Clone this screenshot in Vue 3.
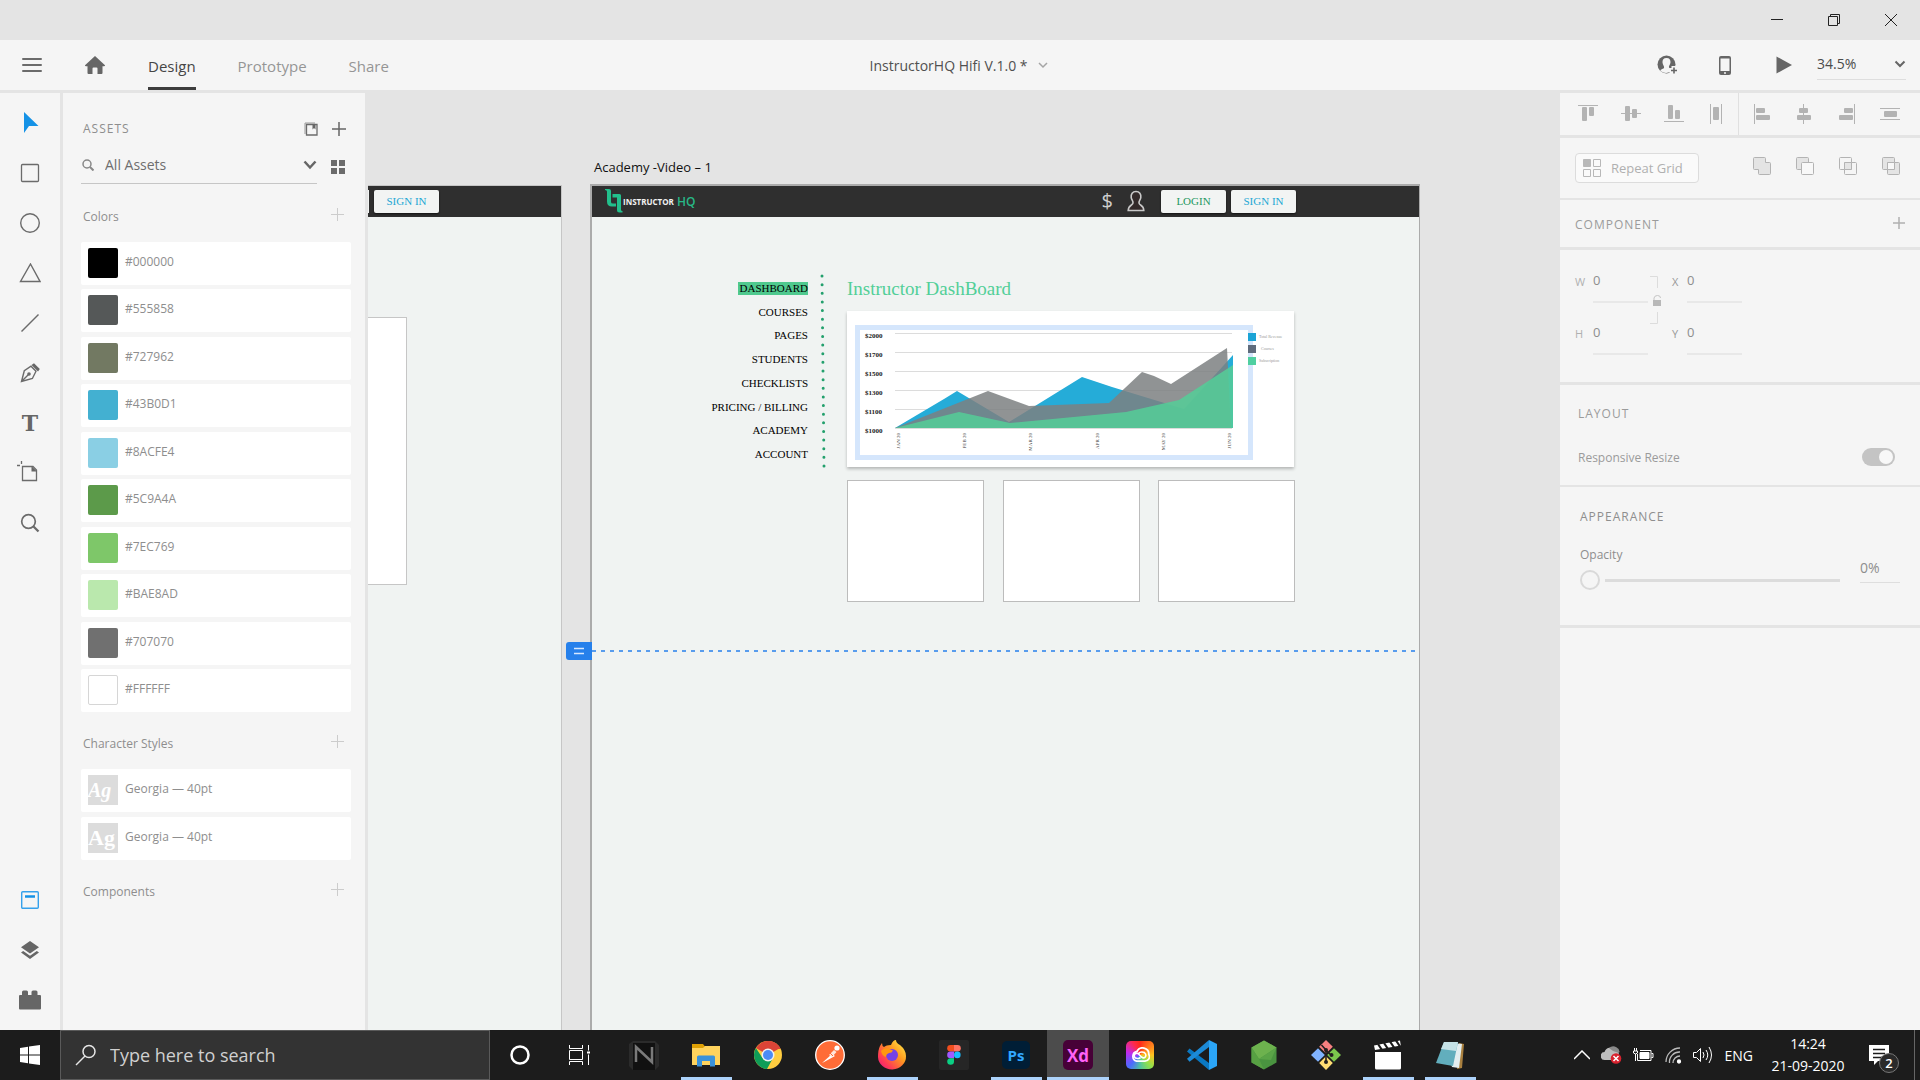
<script setup>
import { ref } from 'vue'

const tabs = ['Design', 'Prototype', 'Share']
const activeTab = ref('Design')
const search = ref('All Assets')
const zoom = ref('34.5%')
const responsive = ref(true)
const opacity = ref(0)

const colors = [
  '#000000', '#555858', '#727962', '#43B0D1', '#8ACFE4',
  '#5C9A4A', '#7EC769', '#BAE8AD', '#707070', '#FFFFFF',
]
const charStyles = [
  { id: 1, name: 'Georgia — 40pt', italic: true },
  { id: 2, name: 'Georgia — 40pt', italic: false },
]
const menu = ['DASHBOARD', 'COURSES', 'PAGES', 'STUDENTS', 'CHECKLISTS', 'PRICING / BILLING', 'ACADEMY', 'ACCOUNT']

const chart = {
  rows: [
    { label: '$2000', y: 22 }, { label: '$1700', y: 41 }, { label: '$1500', y: 60 },
    { label: '$1300', y: 79 }, { label: '$1100', y: 98 }, { label: '$1000', y: 117 },
  ],
  months: [
    { label: 'JAN 20', x: 53 }, { label: 'FEB 20', x: 119 }, { label: 'MAR 20', x: 185 },
    { label: 'APR 20', x: 252 }, { label: 'MAY 20', x: 318 }, { label: 'JUN 20', x: 384 },
  ],
  areas: [
    { color: '#25acd8', opacity: 1, points: '48,117 97,88 110,80 162,111 235,66 265,76 337,98 386,44 386,117' },
    { color: '#7c8081', opacity: 0.85, points: '48,117 141,80 182,95 262,92 295,61 307,65 324,73 380,37 384,117' },
    { color: '#55cc97', opacity: 0.88, points: '48,117 112,101 163,112 279,101 332,89 386,54 386,117' },
  ],
  legend: [
    { label: 'Total Revenue', color: '#1ba4d6', x: 412, y: 22 },
    { label: 'Courses', color: '#5f6b7c', x: 414, y: 34 },
    { label: 'Subscription', color: '#4fcfa0', x: 412, y: 46 },
  ],
}
const cards = [1, 2, 3]
</script>

<template>
  <div class="desktop">
    <header class="titlebar">
      <button class="win" aria-label="Minimize"><svg width="12" height="12"><path d="M0 5.500h12" stroke="#222" /></svg></button>
      <button class="win" aria-label="Restore"><svg width="12" height="12" fill="none" stroke="#222"><path d="M.5 2.500h9v9h-9zM2.500 2.500v-2h9v9h-2" /></svg></button>
      <button class="win" aria-label="Close"><svg width="12" height="12"><path d="M0 0l12 12M12 0L0 12" stroke="#222" /></svg></button>
    </header>

    <div class="appbar">
      <div class="appbar-left">
        <button class="plain" aria-label="Menu"><svg width="20" height="16"><path d="M1 2h18M1 8h18M1 14h18" stroke="#6b6b6b" stroke-width="2" stroke-linecap="round" /></svg></button>
        <button class="plain home" aria-label="Home"><svg width="20" height="18"><path d="M10 0l10 9.200q.3 1-1 1H17.500V17q0 1-1 1H12.500v-5.500q0-1-1-1h-3q-1 0-1 1V18H3.500q-1 0-1-1v-6.800H1q-1.300 0-1-1z" fill="#666" /></svg></button>
        <nav class="tabs">
          <button v-for="t in tabs" :key="t" class="tab" :class="{ active: t === activeTab }" @click="activeTab = t">{{ t }}</button>
        </nav>
      </div>
      <button class="doc">InstructorHQ Hifi V.1.0 *
        <svg width="12" height="8" fill="none"><path d="M2 2l4 4 4-4" stroke="#a5a5a5" stroke-width="1.500" /></svg>
      </button>
      <div class="appbar-right">
        <button class="plain" aria-label="Invite"><svg width="22" height="20"><circle cx="9.500" cy="9.500" r="9" fill="#666" /><path d="M9.500 3c3 0 4.200 2 4 4.500-.2 2-1.600 3-1.600 4.500s4 1.500 3.600 3.500Q9.500 20 3.500 16c-.4-2 3.600-2 3.600-3.500S5.700 9.500 5.500 7.500c-.2-2.500 1-4.500 4-4.500z" fill="#f5f5f5" /><path d="M17 11v9M12.500 15.500h9" stroke="#f5f5f5" stroke-width="5" /><path d="M17 12.500v6M14 15.500h6" stroke="#666" stroke-width="1.600" /></svg></button>
        <button class="plain" aria-label="Preview on device"><svg width="12" height="19"><rect width="12" height="19" rx="2" fill="#666" /><path d="M1.500 2.500h9V15h-9z" fill="#f5f5f5" /><circle cx="6" cy="17" r="1" fill="#f5f5f5" /></svg></button>
        <button class="plain" aria-label="Play"><svg width="16" height="18"><path d="M.5.500L16 9 .5 17.500z" fill="#666" /></svg></button>
        <label class="zoom">
          <select v-model="zoom" aria-label="Zoom level"><option>34.5%</option><option>100%</option></select>
          <svg width="12" height="8" fill="none"><path d="M1.500 1.500L6 6l4.500-4.500" stroke="#666" stroke-width="2" /></svg>
        </label>
      </div>
    </div>

    <main class="workspace">
      <aside class="tools">
        <div class="tool-group">
          <button class="tool" aria-label="Select"><svg width="20" height="22"><path d="M4 0v21l5-7h9.500z" fill="#1592e6" /></svg></button>
          <button class="tool" aria-label="Rectangle"><svg width="20" height="20"><rect x="1.500" y="1.500" width="17" height="17" rx="1" fill="none" stroke="#6b6b6b" stroke-width="1.300" /></svg></button>
          <button class="tool" aria-label="Ellipse"><svg width="22" height="22"><circle cx="11" cy="11" r="9.300" fill="none" stroke="#6b6b6b" stroke-width="1.400" /></svg></button>
          <button class="tool" aria-label="Polygon"><svg width="22" height="20"><path d="M11.500 1L21 18.500H1.500z" fill="none" stroke="#6b6b6b" stroke-width="1.400" /></svg></button>
          <button class="tool" aria-label="Line"><svg width="20" height="20"><path d="M1.500 18.500l17-17" stroke="#6b6b6b" stroke-width="1.400" /></svg></button>
          <button class="tool" aria-label="Pen"><svg width="20" height="20"><path d="M1.500 18.500l2.800-10.800L11 3.200l5 5-3.600 7.300zM1.500 18.500l7-7" fill="none" stroke="#6b6b6b" stroke-width="1.400" /><circle cx="9" cy="11" r="1.800" fill="#6b6b6b" /><path d="M11.500 2L14 .3 19.800 6 18 8.500z" fill="#666" /></svg></button>
          <button class="tool text-tool" aria-label="Text">T</button>
          <button class="tool artboard-tool" aria-label="Artboard"><svg width="24" height="22"><path d="M6.500 6.500h10.500l3.500 3.500v10.500h-14zM5.500 1v3M1 5.500h3" fill="none" stroke="#6b6b6b" stroke-width="1.300" /><path d="M15.500 6l5.500 5.500h-5.500z" fill="#666" /></svg></button>
          <button class="tool" aria-label="Zoom"><svg width="20" height="20" fill="none" stroke="#6b6b6b"><circle cx="8.500" cy="8.500" r="6.800" stroke-width="1.700" /><path d="M13 13l5.500 5.500" stroke-width="2.300" /></svg></button>
        </div>
        <div class="tool-group">
          <button class="tool" aria-label="Libraries"><svg width="18" height="18"><rect x=".7" y=".7" width="16.600" height="16.600" rx="1" fill="none" stroke="#35a1ec" stroke-width="1.400" /><path d="M4 5.500h10" stroke="#1592e6" stroke-width="2.500" /></svg></button>
          <button class="tool" aria-label="Layers"><svg width="20" height="19"><path d="M10 0l9 6.300-9 6.200-9-6.200zM1 11.500l2.200-1.500L10 14.700 16.800 10l2.200 1.500-9 6.500z" fill="#666" /></svg></button>
          <button class="tool" aria-label="Plugins"><svg width="22" height="20"><path d="M0 6q0-1 1-1h2V2q0-1.500 1.500-1.500h3Q9 .5 9 2v3h3.500V2q0-1.500 1.500-1.500h3q1.500 0 1.500 1.500v3h2.500q1 0 1 1v12.500q0 1-1 1H1q-1 0-1-1z" fill="#666" /></svg></button>
        </div>
      </aside>

      <aside class="assets">
        <div class="assets-head">
          <h2 class="caps">ASSETS</h2>
          <button class="plain" aria-label="Library manager"><svg width="14" height="14"><path d="M1 12V1h10" fill="none" stroke="#999" /><path d="M2.500 2.500h10.500v10.500H2.500z" fill="none" stroke="#6b6b6b" stroke-width="1.300" /><path d="M8.500 2.500h3v5l-1.500-1.500-1.500 1.500z" fill="#666" /></svg></button>
          <button class="plain" aria-label="Add asset"><svg width="14" height="14"><path d="M7 0v14M0 7h14" stroke="#666" stroke-width="1.500" /></svg></button>
        </div>
        <div class="assets-search">
          <div class="field">
            <svg width="12" height="12" fill="none" stroke="#888"><circle cx="5" cy="5" r="4" stroke-width="1.500" /><path d="M8 8l3.500 3.500" stroke-width="2" /></svg>
            <input v-model="search" type="text" aria-label="Search assets">
            <svg width="14" height="10" fill="none"><path d="M1.500 1.500L7 7.500l5.500-6" stroke="#666" stroke-width="2.500" /></svg>
          </div>
          <button class="plain" aria-label="Grid view"><svg width="14" height="14" fill="#6b6b6b"><path d="M0 0h6v6H0zM8 0h6v6H8zM0 8h6v6H0zM8 8h6v6H8z" /></svg></button>
        </div>

        <div class="group-head">
          <h3>Colors</h3>
          <button class="plain" aria-label="Add color"><svg width="14" height="14"><path d="M7.500 1v13M1 7.500h13" stroke="#ccc" stroke-width="1" /></svg></button>
        </div>
        <ul class="colors">
          <li v-for="c in colors" :key="c" class="item">
            <span class="swatch" :class="{ light: c === '#FFFFFF' }" :style="{ background: c }"></span>
            <span class="item-name">{{ c }}</span>
          </li>
        </ul>

        <div class="group-head">
          <h3>Character Styles</h3>
          <button class="plain" aria-label="Add character style"><svg width="14" height="14"><path d="M7.500 1v13M1 7.500h13" stroke="#ccc" stroke-width="1" /></svg></button>
        </div>
        <ul class="styles">
          <li v-for="s in charStyles" :key="s.id" class="item">
            <span class="sample" :class="{ italic: s.italic }">Ag</span>
            <span class="item-name">{{ s.name }}</span>
          </li>
        </ul>

        <div class="group-head">
          <h3>Components</h3>
          <button class="plain" aria-label="Add component"><svg width="14" height="14"><path d="M7.500 1v13M1 7.500h13" stroke="#ccc" stroke-width="1" /></svg></button>
        </div>
      </aside>

      <section class="canvas">
        <article class="board board-a">
          <div class="site-head">
            <span class="sliver"></span>
            <button class="site-btn blue">SIGN IN</button>
          </div>
          <div class="panel"></div>
        </article>

        <p class="board-name">Academy -Video – 1</p>
        <article class="board board-b">
          <div class="site-head">
            <a class="logo" href="#">
              <svg width="18" height="24" fill="#22c08c"><path d="M0 0h4q2 0 2 2v11q0 1.500 2 1.500h3v3H7q-5 0-5-5V2.500Q2 1 0 1z" /><path d="M7.500 5h7q1.500 0 1.500 1.500V21q0 1 1.500 1v1.500h-3q-2.500 0-2.500-2.500V8.500H7.500z" /></svg>
              <span class="logo-a">INSTRUCTOR</span><span class="logo-b">HQ</span>
            </a>
            <span class="dollar">$</span>
            <svg class="person" width="18" height="22"><path d="M9 1.500c3.500 0 5.200 2.500 4.800 6-.3 2.500-2 3.300-1.800 5.500.2 2.500 4.500 1.500 4.800 7.500H1.200C1.500 14.500 5.800 15.500 6 13c.2-2.200-1.500-3-1.800-5.500C3.800 4 5.500 1.500 9 1.500z" fill="#332a2a" stroke="#c9c9c9" stroke-width="1.600" /></svg>
            <button class="site-btn green">LOGIN</button>
            <button class="site-btn blue">SIGN IN</button>
          </div>

          <div class="site-body">
            <nav class="site-nav">
              <a v-for="(m, i) in menu" :key="m" href="#" :class="{ current: i === 0 }">{{ m }}</a>
            </nav>
            <svg class="dots" width="6" height="194"><path d="M2 2L4 192" pathLength="22" stroke="#23a06d" stroke-width="3" stroke-linecap="round" stroke-dasharray="0 1" /></svg>
            <div class="site-main">
              <h1>Instructor DashBoard</h1>
              <div class="chart">
                <svg width="447" height="156" viewBox="0 0 447 156">
                  <rect x="10.500" y="16.500" width="393" height="130" fill="none" stroke="#d5e6fc" stroke-width="5" />
                  <g v-for="r in chart.rows" :key="r.label">
                    <path :d="`M48 ${r.y + 0.5}H385`" stroke="#dcdcdc" />
                    <text class="tick" x="18" :y="r.y + 5">{{ r.label }}</text>
                  </g>
                  <polygon v-for="a in chart.areas" :key="a.color" :points="a.points" :fill="a.color" :fill-opacity="a.opacity" />
                  <text v-for="m in chart.months" :key="m.label" class="month" text-anchor="end" :transform="`translate(${m.x} 122) rotate(-90)`">{{ m.label }}</text>
                  <g v-for="l in chart.legend" :key="l.label">
                    <rect x="401" :y="l.y" width="8" height="8" :fill="l.color" />
                    <text class="legend" :x="l.x" :y="l.y + 5">{{ l.label }}</text>
                  </g>
                </svg>
              </div>
              <div class="cards"><div v-for="c in cards" :key="c" class="card"></div></div>
            </div>
          </div>
        </article>
        <div class="guide">
          <span class="handle"><svg width="10" height="8"><path d="M0 1.500h10M0 6.500h10" stroke="#d6e8ff" stroke-width="1.500" /></svg></span>
          <svg class="dash" height="2"><path d="M0 1H826" stroke="#2680eb" stroke-width="1.500" stroke-dasharray="4 5" /></svg>
        </div>
      </section>

      <aside class="inspector">
        <div class="row align">
          <div class="align-half">
            <svg width="20" height="20"><path d="M0 1.500h20" stroke="#b3b3b3" /><rect x="4" y="3" width="5" height="14" rx="1" fill="#b3b3b3" /><rect x="11" y="3" width="5" height="9" rx="1" fill="#b3b3b3" /></svg>
            <svg width="20" height="20"><path d="M0 9.500h20" stroke="#b3b3b3" /><rect x="4" y="2" width="5" height="15" rx="1" fill="#b3b3b3" /><rect x="11" y="5" width="5" height="9" rx="1" fill="#b3b3b3" /></svg>
            <svg width="20" height="20"><path d="M0 17.500h20" stroke="#b3b3b3" /><rect x="4" y="1" width="5" height="14" rx="1" fill="#b3b3b3" /><rect x="11" y="6" width="5" height="9" rx="1" fill="#b3b3b3" /></svg>
            <svg width="20" height="20"><path d="M4.500 0v20M15.500 0v20" stroke="#b3b3b3" /><rect x="7" y="3" width="6" height="13" rx="1" fill="#b3b3b3" /></svg>
          </div>
          <div class="align-half">
            <svg width="20" height="20"><path d="M2.500 0v20" stroke="#b3b3b3" /><rect x="4" y="4" width="9" height="5" rx="1" fill="#b3b3b3" /><rect x="4" y="11" width="14" height="5" rx="1" fill="#b3b3b3" /></svg>
            <svg width="20" height="20"><path d="M9.500 0v20" stroke="#b3b3b3" /><rect x="5" y="4" width="9" height="5" rx="1" fill="#b3b3b3" /><rect x="3" y="11" width="14" height="5" rx="1" fill="#b3b3b3" /></svg>
            <svg width="20" height="20"><path d="M17.500 0v20" stroke="#b3b3b3" /><rect x="7" y="4" width="9" height="5" rx="1" fill="#b3b3b3" /><rect x="2" y="11" width="14" height="5" rx="1" fill="#b3b3b3" /></svg>
            <svg width="20" height="20"><path d="M0 4.500h20M0 15.500h20" stroke="#b3b3b3" /><rect x="4" y="7" width="13" height="6" rx="1" fill="#b3b3b3" /></svg>
          </div>
        </div>

        <div class="row repeat">
          <button class="repeat-btn">
            <svg width="18" height="18" fill="none" stroke="#b8b8b8"><path d="M.5.500h7v7h-7z" fill="#b8b8b8" /><path d="M10.500.500h7v7h-7zM.5 10.500h7v7h-7zM10.500 10.500h7v7h-7z" /></svg>
            Repeat Grid
          </button>
          <div class="bools">
            <svg width="18" height="18" stroke="#b3b3b3" fill="#e4e4e4"><path d="M1.500.500h10q1 0 1 1v4h4q1 0 1 1v10q0 1-1 1h-10q-1 0-1-1v-4h-4q-1 0-1-1v-10q0-1 1-1z" /></svg>
            <svg width="18" height="18" stroke="#b3b3b3"><rect x=".5" y=".5" width="12" height="12" rx="1" fill="#e4e4e4" /><rect x="5.500" y="5.500" width="12" height="12" rx="1" fill="#f8f8f8" /></svg>
            <svg width="18" height="18" stroke="#b3b3b3" fill="none"><rect x=".5" y=".5" width="12" height="12" rx="1" /><rect x="5.500" y="5.500" width="12" height="12" rx="1" /><path d="M5.500 5.500h7v7h-7z" fill="#e4e4e4" /></svg>
            <svg width="18" height="18" stroke="#b3b3b3"><rect x=".5" y=".5" width="12" height="12" rx="1" fill="#e4e4e4" /><rect x="5.500" y="5.500" width="12" height="12" rx="1" fill="#e4e4e4" /><path d="M5.500 5.500h7v7h-7z" fill="#f8f8f8" /></svg>
          </div>
        </div>

        <div class="row component">
          <h2 class="caps">COMPONENT</h2>
          <button class="plain" aria-label="Make component"><svg width="12" height="12"><path d="M6 0v12M0 6h12" stroke="#b0b0b0" stroke-width="1.500" /></svg></button>
        </div>

        <div class="row geometry">
          <div class="pair">
            <label class="num"><span>W</span><input type="text" value="0"></label>
            <label class="num"><span>H</span><input type="text" value="0"></label>
          </div>
          <svg class="lock" width="12" height="50"><path d="M0 1.500h7.500V13M7.500 37v11.500H0" fill="none" stroke="#dcdcdc" /><path d="M4 25.500V23q.5-2.500 3.500-2.500t3 2.500" fill="none" stroke="#c4c4c4" /><rect x="3" y="25" width="8" height="6" fill="#b8b8b8" /></svg>
          <div class="pair second">
            <label class="num"><span>X</span><input type="text" value="0"></label>
            <label class="num"><span>Y</span><input type="text" value="0"></label>
          </div>
        </div>

        <div class="row layout">
          <h2 class="caps">LAYOUT</h2>
          <label class="switch">Responsive Resize<input v-model="responsive" type="checkbox"></label>
        </div>

        <div class="row appearance">
          <h2 class="caps">APPEARANCE</h2>
          <div class="opacity">
            <label class="slider">Opacity<input v-model="opacity" type="range" min="0" max="100"></label>
            <input class="percent" type="text" :value="opacity + '%'" aria-label="Opacity value">
          </div>
        </div>
      </aside>
    </main>

    <footer class="taskbar">
      <button class="start" aria-label="Start"><svg width="20" height="20" fill="#fff"><path d="M0 3l8-1.200V9.500H0zM9 1.600L20 0v9.500H9zM0 10.500h8v7.700L0 17zM9 10.500h11V20L9 18.400z" /></svg></button>
      <label class="find">
        <svg width="22" height="22" fill="none" stroke="#e6e6e6" stroke-width="1.500"><circle cx="14" cy="7.500" r="6" /><path d="M10 12l-9 9" /></svg>
        <input type="text" placeholder="Type here to search" aria-label="Search">
      </label>
      <button class="sys" aria-label="Cortana"><svg width="20" height="20"><circle cx="10" cy="10" r="8.500" fill="none" stroke="#fff" stroke-width="2.500" /></svg></button>
      <button class="sys" aria-label="Task view"><svg width="22" height="20" fill="none" stroke="#fff"><path d="M.5 5.500h13v9H.5zM.5 0v3.500h13V0M.5 20v-3.500h13V20M19.500 0v20" /><path d="M17.500 6h4v3h-4z" fill="#fff" stroke="#1c1c1c" /></svg></button>
      <div class="apps">
        <button class="app" aria-label="Notes"><svg width="30" height="30"><path d="M4 1h22l4 4v21l-4 4H4l-4-4V4z" fill="#2b2b2b" /><path d="M4 3h22v27H4z" fill="#111" /><path d="M7 22V7l16 15V7" fill="none" stroke="#7a7a7a" stroke-width="2.500" /></svg></button>
        <button class="app open" aria-label="File Explorer"><svg width="28" height="24"><path d="M0 1h11l2 2.500h15V22H0z" fill="#dfa004" /><path d="M0 5h11l2-2h15v19H0z" fill="#ffd35d" /><path d="M5 23.500V14q0-1.500 1.500-1.500h15q1.500 0 1.500 1.500v9.500h-5V18h-8v5.500z" fill="#3a92da" /></svg></button>
        <button class="app" aria-label="Chrome"><svg width="28" height="28"><circle cx="14" cy="14" r="14" fill="#ffcd40" /><path d="M14 14L1.900 7A14 14 0 0 1 26.100 7z" fill="#db4437" /><path d="M14 0A14 14 0 0 1 26.600 8H14z" fill="#db4437" /><path d="M1.900 7A14 14 0 0 0 13 28l6-11-10.500 0z" fill="#0f9d58" /><circle cx="14" cy="14" r="6.500" fill="#f1f1f1" /><circle cx="14" cy="14" r="5" fill="#4c8bf5" /></svg></button>
        <button class="app" aria-label="Postman"><svg width="30" height="30"><circle cx="15" cy="15" r="14.300" fill="#ff6c37" stroke="#fff" stroke-width="1.300" /><path d="M7 23l10-9 3 2-10 5.500z" fill="#fff" /><path d="M14 15l5-5 2.500 2-4.500 5z" fill="#ffe5da" /><circle cx="22" cy="8" r="2.600" fill="#fff" /><path d="M15 13l3 3" stroke="#ff6c37" /></svg></button>
        <button class="app open" aria-label="Firefox"><svg width="30" height="30"><defs><linearGradient id="fx" x1="1" y1="0" x2="0" y2="1"><stop offset="0" stop-color="#fff44f" /><stop offset=".4" stop-color="#ff9a1f" /><stop offset=".75" stop-color="#ff3a55" /><stop offset="1" stop-color="#e31587" /></linearGradient></defs><path d="M3 6l2-3q0 3 2 4 2-2 7-2 2-5 5-5 0 3 4 5 6 5 6 11a14 13 0 0 1-28 1Q1 10 3 6z" fill="url(#fx)" /><circle cx="15" cy="15" r="6" fill="#7542e5" /><path d="M4 11q3-4 8-2l4 1.500q-1 2.500-4 2.500-3 1-3 4-4-1-5-6z" fill="#ff980e" /></svg></button>
        <button class="app" aria-label="Figma"><svg width="30" height="30"><rect width="30" height="30" rx="2" fill="#262626" /><path d="M15 5h-3.500a3.300 3.300 0 0 0 0 6.600H15z" fill="#f24e1e" /><path d="M15 5h3.500a3.300 3.300 0 0 1 0 6.600H15z" fill="#ff7262" /><path d="M15 11.600h-3.500a3.300 3.300 0 0 0 0 6.600H15z" fill="#a259ff" /><circle cx="18.300" cy="14.900" r="3.300" fill="#1abcfe" /><path d="M15 18.200v3.300a3.400 3.300 0 1 1-3.500-3.300z" fill="#0acf83" /></svg></button>
        <button class="app open" aria-label="Photoshop"><span class="badge ps">Ps</span></button>
        <button class="app open active" aria-label="XD"><span class="badge xd">Xd</span></button>
        <button class="app" aria-label="Creative Cloud"><span class="badge cc"><svg width="20" height="16" fill="none" stroke="#fff"><path d="M6.500 14.200h8.500a4.500 4.500 0 0 0 3.800-6.800A6.200 6.200 0 0 0 7 4.500a5 5 0 0 0-.5 9.700z" stroke-width="1.800" /><path d="M10.500 10.500q-2 1.500-4 .8a2.500 2.500 0 1 1 2-4.300l3 3q2 1.500 3.500.3t.6-3.300-3.800-2-3 2" stroke-width="1.600" /></svg></span></button>
        <button class="app" aria-label="Visual Studio Code"><svg width="30" height="30"><path d="M22 0v30L0 11.500l2.500-3L22 23z" fill="#0a78c2" /><path d="M22 0L0 18.800l2.500 3L22 7z" fill="#1c8ad6" /><path d="M22 0l8 4v22l-8 4z" fill="#2ba5f7" /></svg></button>
        <button class="app" aria-label="Node.js"><svg width="26" height="30"><path d="M13 0.500l12.500 7v15L13 29.500 .5 22.500v-15z" fill="#4a9440" /><path d="M13 .5l12.500 7L8 19 .5 7.500z" fill="#6db24e" /><path d="M25.500 7.500L20 20 8 19z" fill="#5aa447" /><path d="M.5 7.500L8 19l5 10.500-12.500-7z" fill="#57a043" /></svg></button>
        <button class="app" aria-label="Git"><svg width="30" height="30"><path d="M15 0l6.800 6.800-6.800 6.800-6.800-6.800z" fill="#f88080" /><path d="M23 8.200l7 6.800-7 6.800-6.800-6.800z" fill="#7bc74d" /><path d="M7 8.200l6.800 6.800L7 21.800 0 15z" fill="#80b3ff" /><path d="M15 16.200l6.800 6.800L15 30l-6.800-7z" fill="#ffdc73" /><path d="M10.500 5l4.500 5v12M15 10.500l5 4.500" stroke="#231f20" stroke-width="1.600" fill="none" /><g fill="#231f20"><circle cx="15" cy="10" r="2" /><circle cx="20.500" cy="15" r="2" /><circle cx="15" cy="22" r="2" /></g></svg></button>
        <button class="app open" aria-label="Clapperboard"><svg width="28" height="30"><path d="M1 12h26v16q0 1.500-1.500 1.500h-23Q1 29.500 1 28z" fill="#fff" /><path d="M0 5.500l26-5 .8 5L1 10z" fill="#fff" /><path d="M4 4l4 6M10 3l4 6M16 1.500l4 6M22 .5l4 6" stroke="#1c1c1c" stroke-width="2.200" /></svg></button>
        <button class="app open" aria-label="Notepad"><svg width="28" height="30"><path d="M23 3l5 1-2 24-5 1z" fill="#a9803f" /><path d="M8 2l18 2-3 24-7-1z" fill="#e3eef0" /><path d="M8 2h14l-5 24L0 23z" fill="#62aebd" /><path d="M8 2h14l-2 9L5 9z" fill="#c5e2e6" /></svg></button>
      </div>
      <div class="tray">
        <svg width="16" height="10" fill="none" stroke="#fff" stroke-width="1.500"><path d="M0 9l8-8 8 8" /></svg>
        <svg width="21" height="18"><path d="M4 14a4 4 0 0 1-.5-8A6 6 0 0 1 14 4q4 1 4 5v5z" fill="#bdbdbd" /><path d="M8 2a6 5 0 0 1 10 5l-6-2z" fill="#8a8a8a" /><circle cx="15" cy="12.500" r="5.300" fill="#d8232f" /><path d="M12.500 10l5 5M17.500 10l-5 5" stroke="#fff" stroke-width="1.500" /></svg>
        <svg width="21" height="14" fill="none" stroke="#fff"><path d="M4.500 6v6.500h13.500v-10H7M18.500 5.500h1.500v4h-1.500M1.500 0v3M3.500 0v3M.5 3h4v2q-2 2-4 0zM2.500 6v7" /><path d="M7 4.500h9v6H7z" fill="#fff" /></svg>
        <svg width="17" height="17" fill="none" stroke="#bbb" stroke-width="1.300"><path d="M1 15A14 14 0 0 1 15 1M4.500 16A10 10 0 0 1 15 5M8 16a7 7 0 0 1 7-7" /><circle cx="14" cy="14.500" r="1.500" fill="#fff" stroke="#fff" /></svg>
        <svg width="21" height="18" fill="none" stroke="#fff"><path d="M.5 6.500h3l4-4v13l-4-4h-3z" /><path d="M10 6q2 3 0 6M13 4q3.500 5 0 10M16 1q5 8 0 16" /></svg>
        <span class="lang">ENG</span>
        <time class="clock">14:24<br>21-09-2020</time>
        <button class="notes" aria-label="Notifications"><svg width="20" height="20"><path d="M0 0h20v16H9l-4 4v-4H0z" fill="#fff" /><path d="M4 4.500h12M4 8.500h12M4 12.500h12" stroke="#1c1c1c" stroke-width="1.300" /></svg><span class="count">2</span></button>
        <span class="peek"></span>
      </div>
    </footer>
  </div>
</template>

<style>
body { margin: 0; background: #e4e4e4; }
</style>

<style scoped>
* { box-sizing: border-box; }
.desktop { min-height: 100vh; display: flex; flex-direction: column; font-family: "Open Sans", "Noto Sans", sans-serif; font-size: 12px; color: #8e8e8e; overflow: hidden; }
button, input, select { font: inherit; color: inherit; border: 0; background: none; padding: 0; margin: 0; outline: 0; border-radius: 0; }
svg { display: block; flex: none; }
h1, h2, h3, p, ul { margin: 0; padding: 0; font-weight: 400; list-style: none; }
a { color: inherit; text-decoration: none; }
.plain { display: flex; align-items: center; }
.caps { font-size: 12px; letter-spacing: 1px; line-height: 20px; }

.titlebar { height: 40px; display: flex; justify-content: flex-end; align-items: center; background: #e4e4e4; padding-right: 1px; }
.win { width: 57px; height: 40px; display: flex; align-items: center; justify-content: center; }

.appbar { height: 53px; display: flex; align-items: stretch; justify-content: space-between; background: #f5f5f5; border-bottom: 3px solid #e4e4e4; }
.appbar-left, .appbar-right { flex: 1; display: flex; align-items: center; }
.appbar-left { padding-left: 22px; }
.home { margin-left: 43px; }
.tabs { display: flex; gap: 42px; margin-left: 43px; align-self: stretch; }
.tab { font-size: 15px; color: #959595; border-top: 5px solid transparent; border-bottom: 3px solid transparent; }
.tab.active { color: #454545; border-bottom-color: #3d3d3d; }
.doc { display: flex; align-items: center; gap: 10px; margin-right: 9px; font-size: 14px; color: #505050; }
.appbar-right { justify-content: flex-end; padding-right: 14px; }
.appbar-right .plain:nth-child(1) { margin-right: 40px; }
.appbar-right .plain:nth-child(2) { margin-right: 45px; }
.appbar-right .plain:nth-child(3) { margin-right: 25px; }
.zoom { width: 89px; height: 30px; display: flex; align-items: center; padding-bottom: 2px; border-bottom: 1px solid #dedede; color: #4b4b4b; }
.zoom select { flex: 1; font-size: 14px; appearance: none; }

.workspace { flex: 1; display: flex; align-items: stretch; min-height: 0; }
.tools { width: 63px; display: flex; flex-direction: column; justify-content: space-between; padding: 5px 0; background: #f5f5f5; border-right: 3px solid #e4e4e4; }
.tool { width: 60px; height: 50px; display: flex; align-items: center; justify-content: center; }
.text-tool { font-family: "DejaVu Serif", serif; font-weight: 700; font-size: 22px; color: #666; }
.artboard-tool { padding: 0 4px 4px 0; }

.assets { width: 305px; padding: 0 14px 0 18px; background: #f5f5f5; border-right: 3px solid #e4e4e4; }
.assets-head { display: flex; align-items: center; gap: 14px; height: 40px; margin-top: 16px; padding: 0 5px 0 2px; }
.assets-head .caps { flex: 1; }
.assets-search { display: flex; align-items: center; gap: 14px; height: 35px; padding-right: 6px; }
.field { flex: 1; height: 35px; display: flex; align-items: center; padding: 0 0 3px 1px; border-bottom: 1px solid #c6c6c6; }
.field input { flex: 1; min-width: 0; margin-left: 11px; font-size: 14px; color: #6e6e6e; }
.group-head { display: flex; align-items: center; justify-content: space-between; height: 57px; padding: 6px 7px 0 2px; }
.assets-search + .group-head { height: 58px; padding-top: 7px; }
.group-head h3 { font-size: 12px; }
.group-head .plain { margin-bottom: 6px; }
.colors { height: 470px; display: flex; flex-direction: column; justify-content: space-between; }
.styles { display: flex; flex-direction: column; gap: 5px; }
.item { height: 43px; display: flex; align-items: center; gap: 7px; padding: 0 7px 1px; background: #fff; border-radius: 2px; }
.item-name { padding-bottom: 3px; }
.swatch { width: 30px; height: 30px; border-radius: 2px; }
.swatch.light { border: 1px solid #d6d6d6; }
.sample { width: 30px; height: 30px; background: #dcdcdc; color: #fff; font-family: "Liberation Serif", serif; font-weight: 700; font-size: 22px; line-height: 30px; }
.sample.italic { font-style: italic; font-size: 20px; }

.canvas { flex: 1; position: relative; background: #e4e4e4; overflow: hidden; }
.board { position: absolute; bottom: 0; background: #f0f3f2; border: 1px solid #c6c6c6; border-bottom: 0; font-family: "Liberation Serif", serif; }
.board-a { left: 0; top: 92px; width: 194px; border-left: 0; }
.sliver { width: 1px; height: 23px; margin-right: 5px; background: #f2f4f3; }
.panel { width: 39px; height: 268px; margin-top: 100px; background: #fff; border: 1px solid #c6c6c6; border-left: 0; }
.board-name { position: absolute; left: 226px; top: 64px; font-size: 13px; line-height: 20px; color: #111; }
.board-b { left: 222px; top: 91px; width: 830px; border: 1px solid #ababab; border-width: 2px 1px 0 2px; }
.site-head { height: 31px; display: flex; align-items: center; padding-bottom: 1px; background: #2f2f2f; }
.board-b .site-head { padding-left: 13px; padding-right: 123px; }
.logo { display: flex; align-items: center; flex: 1; font-family: "Open Sans", sans-serif; }
.logo-a { font-size: 8px; font-weight: 700; color: #f2f2f2; }
.logo-b { margin-left: 3px; font-size: 12px; font-weight: 600; color: #28b886; }
.dollar { font-family: "Open Sans", sans-serif; font-size: 20px; line-height: 24px; color: #cfcfcf; }
.person { margin: 0 16px 0 14px; }
.site-btn { width: 65px; height: 23px; flex: none; background: #f2f4f3; border-radius: 2px; font-size: 11px; box-shadow: 0 1px 2px rgba(0, 0, 0, 0.6); }
.site-btn.green { color: #25985f; }
.site-btn.blue { color: #22a7d3; }
.site-btn + .site-btn { margin-left: 5px; }
.site-body { display: flex; align-items: flex-start; padding-top: 57px; }
.site-nav { width: 216px; height: 179px; margin-top: 8px; display: flex; flex-direction: column; justify-content: space-between; align-items: flex-end; font-size: 11px; line-height: 13px; color: #000; }
.site-nav .current { padding-left: 2px; background: #4fc98e; }
.dots { margin-left: 12px; }
.site-main { width: 448px; margin: 3px 0 0 21px; }
.site-main h1 { font-size: 19px; line-height: 24px; color: #52cf98; }
.chart { width: 447px; height: 156px; margin-top: 10px; background: #fff; box-shadow: 0 2px 3px rgba(0, 0, 0, 0.25); }
.tick { font-size: 7px; font-weight: 700; fill: #222; }
.month { font-size: 5px; fill: #444; }
.legend { font-size: 4px; fill: #999; }
.cards { display: flex; justify-content: space-between; margin-top: 13px; }
.card { width: 137px; height: 122px; background: #fff; border: 1px solid #bcbcbc; }
.guide { position: absolute; left: 198px; top: 549px; width: 852px; display: flex; align-items: center; }
.handle { width: 26px; height: 18px; display: flex; align-items: center; justify-content: center; background: #2680eb; border-radius: 3px 0 0 3px; }
.dash { flex: 1; min-width: 0; }

.inspector { width: 360px; background: #f5f5f5; }
.row { border-bottom: 3px solid #e4e4e4; }
.align { height: 45px; display: flex; }
.align-half { flex: 1; display: flex; align-items: center; justify-content: space-between; padding: 0 11px 0 18px; }
.align-half + .align-half { border-left: 1px solid #e0e0e0; padding: 0 20px 0 13px; }
.repeat { height: 62px; display: flex; align-items: center; justify-content: space-between; padding: 0 20px 0 15px; border-bottom-width: 2px; }
.repeat-btn { width: 124px; height: 30px; display: flex; align-items: center; gap: 10px; padding-left: 7px; border: 1px solid #dcdcdc; border-radius: 4px; background: #fafafa; font-size: 13px; color: #b0b0b0; }
.bools { display: flex; gap: 25px; padding-bottom: 4px; }
.component { height: 50px; display: flex; align-items: center; justify-content: space-between; padding: 0 15px; color: #9b9b9b; }
.component .caps { padding-top: 2px; }
.component .plain { padding-bottom: 2px; }
.geometry { height: 135px; display: flex; padding: 21px 15px 0; }
.pair { width: 73px; display: flex; flex-direction: column; gap: 20px; }
.pair.second { width: 70px; margin-left: 10px; }
.num { display: flex; align-items: flex-start; height: 32px; }
.num span { width: 18px; line-height: 22px; font-size: 11px; color: #b0b0b0; }
.second .num span { width: 15px; color: #999; }
.num input { flex: 1; min-width: 0; height: 32px; padding-bottom: 12px; border-bottom: 2px solid #e8e8e8; font-size: 13px; }
.lock { margin: 4px 0 0 2px; }
.layout { height: 102px; padding: 19px 25px 0 18px; border-bottom-width: 2px; color: #9b9b9b; }
.switch { display: flex; align-items: center; justify-content: space-between; height: 20px; margin-top: 23px; }
.switch input { appearance: none; width: 33px; height: 18px; border-radius: 9px; background: #c4c4c4; display: flex; align-items: center; justify-content: flex-end; padding: 2px; }
.switch input::after { content: ""; width: 14px; height: 14px; border-radius: 7px; background: #f8f8f8; }
.appearance { height: 141px; padding: 20px 20px 0; }
.opacity { display: flex; justify-content: space-between; margin-top: 18px; }
.slider { width: 260px; display: flex; flex-direction: column; line-height: 20px; }
.slider input { appearance: none; width: 260px; height: 20px; margin-top: 5px; background: linear-gradient(#dcdcdc, #dcdcdc) 25px 9px / 235px 3px no-repeat; }
.slider input::-webkit-slider-thumb { appearance: none; width: 20px; height: 20px; border-radius: 10px; border: 2px solid #d9d9d9; background: #f5f5f5; }
.percent { width: 40px; height: 26px; margin-top: 12px; padding-bottom: 4px; border-bottom: 1px solid #dedede; font-size: 14px; }

.taskbar { height: 50px; display: flex; background: #1c1c1c; color: #fff; }
.start { width: 60px; display: flex; align-items: center; justify-content: center; }
.find { width: 430px; display: flex; align-items: center; padding-left: 14px; gap: 13px; background: #333; border: 1px solid #5a5a5a; }
.find input { flex: 1; min-width: 0; font-size: 18px; }
.find input::placeholder { color: #d0d0d0; opacity: 1; }
.sys { width: 60px; display: flex; align-items: center; justify-content: center; }
.apps { display: flex; margin-left: 3px; }
.app { width: 62px; height: 50px; display: flex; align-items: center; justify-content: center; }
.app.open { background: linear-gradient(#acd2fa, #acd2fa) center bottom / 51px 3px no-repeat; }
.app.active { background: linear-gradient(#acd2fa, #acd2fa) center bottom / 62px 3px no-repeat #4c4c4c; }
.badge { display: flex; align-items: center; justify-content: center; width: 28px; height: 28px; border-radius: 5px; font-weight: 700; }
.ps { background: #001e36; color: #31a8ff; font-size: 15px; }
.xd { width: 30px; height: 30px; background: #470137; color: #ff61f6; font-size: 17px; }
.cc { background: conic-gradient(from 0deg, #ff2a1a 0, #ffc21f 25%, #8fe04b 38%, #4fc3a0 50%, #4a6bff 62%, #c02af0 78%, #ff2a4c 92%, #ff2a1a 100%); }
.tray { flex: 1; display: flex; align-items: center; justify-content: flex-end; font-size: 14px; }
.tray > svg { margin-right: 11px; }
.clock { width: 80px; margin-left: 15px; text-align: center; line-height: 22px; }
.notes { position: relative; width: 20px; margin: 0 25px 0 21px; }
.count { position: absolute; left: 10px; top: 8px; width: 20px; height: 20px; border-radius: 10px; border: 1px solid #777; background: #2a2a2a; font-weight: 600; font-size: 13px; line-height: 18px; }
.peek { width: 6px; height: 50px; border-left: 1px solid #666; }
</style>
